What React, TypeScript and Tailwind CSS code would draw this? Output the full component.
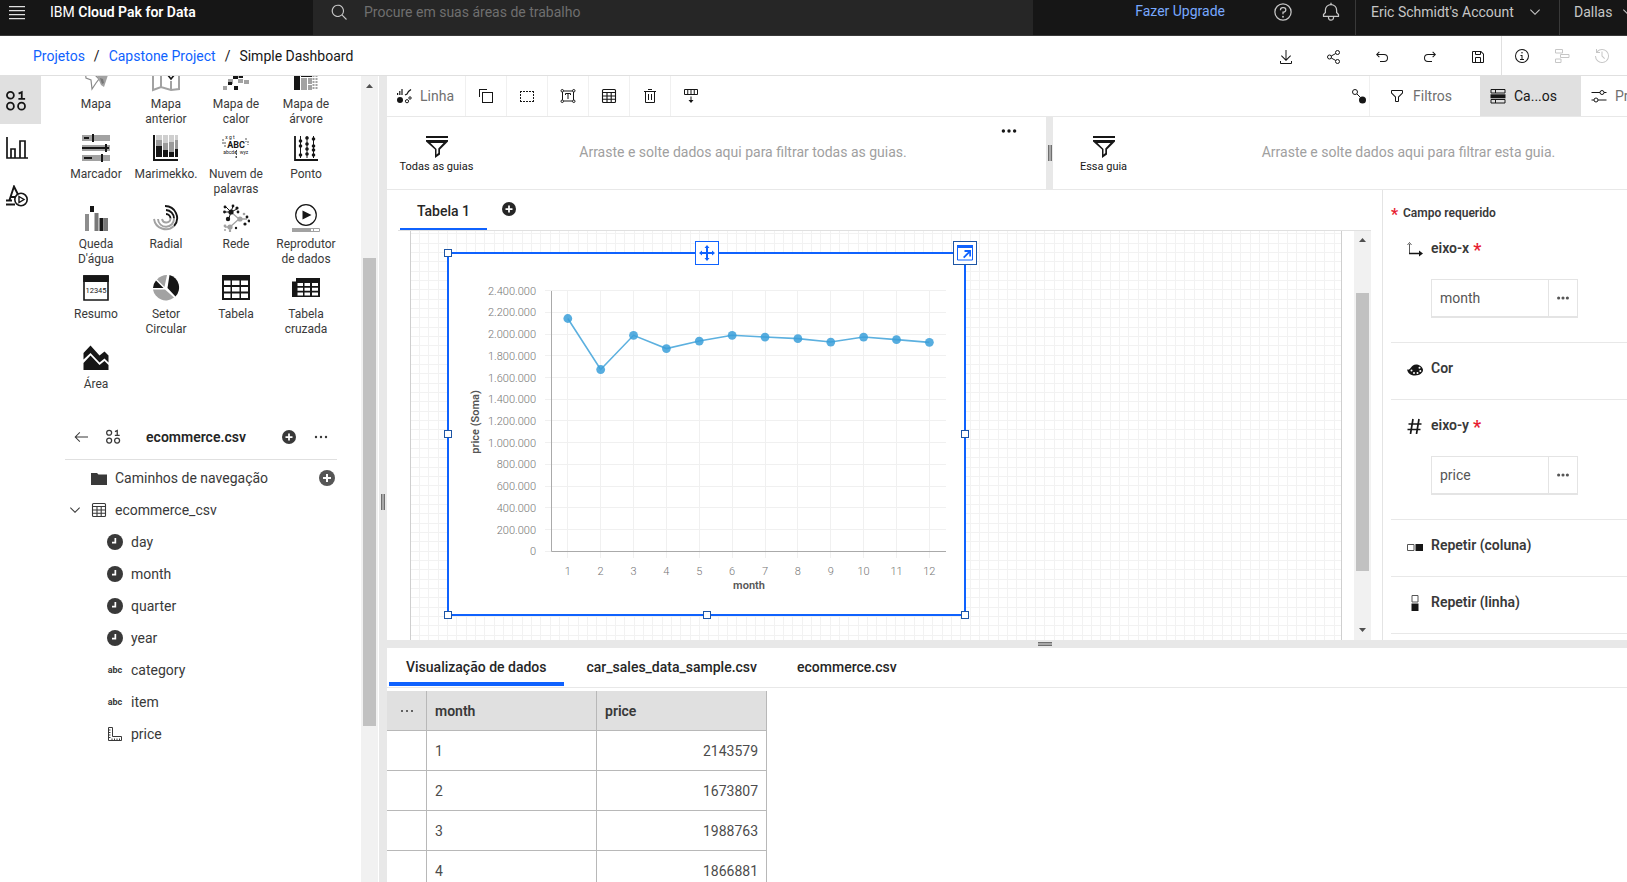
import type { ReactNode } from "react";

type IconProps = { className?: string; children: ReactNode; box?: string };

function Icon({ className = "size-4", children, box = "0 0 32 32" }: IconProps) {
  return (
    <svg aria-hidden="true" viewBox={box} fill="currentColor" className={`shrink-0 ${className}`}>
      {children}
    </svg>
  );
}

const ChevronDown = ({ className }: { className?: string }) => (
  <Icon className={className}>
    <path d="M16 22L6 12 7.4 10.6 16 19.2 24.6 10.6 26 12z" />
  </Icon>
);

const DataSet = ({ className }: { className?: string }) => (
  <Icon className={className} box="0 0 20 20">
    <g fill="none" stroke="currentColor" strokeWidth="1.7">
      <circle cx="4.2" cy="5" r="3.3" />
      <circle cx="4.2" cy="15.4" r="3.3" />
      <circle cx="14.8" cy="15.4" r="3.3" />
      <path d="M12 3.4L15 2v6.5M11.8 8.4h6.4" />
    </g>
  </Icon>
);

const AddFilled = ({ className }: { className?: string }) => (
  <Icon className={className} box="0 0 16 16">
    <circle cx="8" cy="8" r="8" />
    <path d="M7 4h2v3h3v2H9v3H7V9H4V7h3z" fill="#fff" />
  </Icon>
);

const Dots = ({ className = "size-4", r = 1.2 }: { className?: string; r?: number }) => (
  <Icon className={className} box="0 0 16 16">
    <circle cx="3" cy="8" r={r} />
    <circle cx="8" cy="8" r={r} />
    <circle cx="13" cy="8" r={r} />
  </Icon>
);

const TableGrid = ({ className }: { className?: string }) => (
  <Icon className={className} box="0 0 16 16">
    <g fill="none" stroke="currentColor" strokeWidth="1.1">
      <rect x="1.5" y="1.5" width="13" height="13" rx="1" />
      <path d="M1.5 4.5h13M1.5 8h13M1.5 11.3h13M6 4.5v10M10.2 4.5v10" />
    </g>
  </Icon>
);

const Clock = () => (
  <Icon box="0 0 16 16">
    <circle cx="8" cy="8" r="8" />
    <path d="M7.5 4h1.7v5.4H5V7.8h2.5z" fill="#fff" />
  </Icon>
);

const Ruler = () => (
  <Icon box="0 0 16 16">
    <path
      d="M1.5 1.5h4v9h9v4h-13zM1.5 4h2M1.5 6.5h2M1.5 9h2M1.5 11.5h2M5 14.5v-2M7.5 14.5v-2M10 14.5v-2M12.5 14.5v-2"
      fill="none"
      stroke="currentColor"
    />
  </Icon>
);

const FilterAll = () => (
  <Icon className="size-[22px]" box="0 0 22 22">
    <path d="M0 0h22v2H0zM0 4h22v1.5l-8 8v5L9 22v-8.5L0 5.5zM4.5 7l6 6v5.5l1.8-1.4V12.5L17.5 7z" fillRule="evenodd" />
  </Icon>
);

const G = "#a2a2a2";

const chartTypes: { label: string; art: ReactNode }[] = [
  {
    label: "Mapa",
    art: (
      <>
        <path d="M3 6l1 8 5 2 1 9 4-6 3-4-6-6z" fill="none" stroke="#8a8a8a" strokeWidth="1.2" />
        <path d="M15 12l11-1-4 12-3-2z" fill={G} />
        <path d="M18 14l3 1 1 4-2 1z" fill="#777" />
      </>
    ),
  },
  {
    label: "Mapa anterior",
    art: (
      <>
        <path d="M1 4v22l8-3 10 3 8-1V3M9 4v19M19 17v9" fill="none" stroke={G} strokeWidth="2" />
        <path d="M15 10l4 5 4-5" fill="none" stroke="#161616" strokeWidth="1.6" />
      </>
    ),
  },
  {
    label: "Mapa de calor",
    art: (
      <>
        <path d="M6 15h5v5H6zM16 15h5v4h-5zM22 16h5v4h-5zM1 22h4v4H1zM16 10h5v4h-5z" fill={G} />
        <path d="M11 10h5v5h-5zM17 10h4v4h-4zM6 18h4v3H6zM12 22h4v4h-4z" />
      </>
    ),
  },
  {
    label: "Mapa de árvore",
    art: (
      <>
        <path d="M2 8h6v18H2zM9 8h11v5H9z" />
        <path d="M9 14h6v12H9zM16 14h4v6h-4zM16 21h4v5h-4z" fill={G} />
        <path d="M21.5 8v18M24.5 8v18" stroke={G} strokeWidth="2" strokeDasharray="2 1" />
      </>
    ),
  },
  {
    label: "Marcador",
    art: (
      <>
        <path d="M0 1h28v6H0zM0 11h28v6H0zM0 21h28v6H0z" fill={G} />
        <path d="M2 3h5v2H2zM10 0h2v8h-2zM0 13h27v2H0zM23 10h2v8h-2zM2 23h8v2H2zM19 20h2v8h-2z" />
      </>
    ),
  },
  {
    label: "Marimekko.",
    art: (
      <>
        <path d="M4 1h6v8H4zM11 1h5v10h-5zM17 1h5v12h-5zM23 1h3v8h-3z" fill="#cfcfcf" />
        <path d="M4 6h6v6H4zM11 9h5v7h-5zM17 8h5v10h-5zM23 6h3v9h-3z" fill="#9b9b9b" />
        <path d="M1 1h2v24h23v2H1zM4 12h6v11H4zM11 16h5v7h-5zM17 18h5v5h-5zM23 15h3v8h-3z" />
      </>
    ),
  },
  {
    label: "Nuvem de palavras",
    art: (
      <g fontFamily="Roboto, sans-serif" textAnchor="middle">
        <text x="14" y="14" fontSize="9" fontWeight="700">ABC</text>
        <text x="8" y="20" fontSize="5">abcde</text>
        <text x="22" y="20" fontSize="5">wyz</text>
        <text x="8" y="5" fontSize="5">x g t</text>
        <path d="M1 5v5M3 8v5M24 4v4M26 7v4M14.5 16v8M13 17.5h3M13 23h3" stroke="#555" strokeDasharray="2 1" />
      </g>
    ),
  },
  {
    label: "Ponto",
    art: (
      <>
        <path d="M3 2v24h23" fill="none" stroke="#161616" strokeWidth="1.8" />
        <path d="M8.5 2v22M15 2v22M21.5 2v22" stroke="#161616" />
        {[[8.5, 7], [8.5, 12], [8.5, 21], [15, 4], [15, 10], [15, 15], [15, 20], [21.5, 5], [21.5, 12], [21.5, 16], [21.5, 21]].map(([x, y]) => (
          <circle key={`${x}-${y}`} cx={x} cy={y} r="1.8" />
        ))}
      </>
    ),
  },
  {
    label: "Queda D'água",
    art: (
      <>
        <path d="M3 10h4v17H3z" fill="#8d8d8d" />
        <path d="M12.5 9h4v18h-4zM22 14h4v13h-4z" fill="#777" />
        <path d="M8 2h4v6H8zM17.5 14h4v13h-4z" />
      </>
    ),
  },
  {
    label: "Radial",
    art: (
      <g fill="none" strokeWidth="1.9">
        <path d="M13 2a12 12 0 0 1 9 20M14 6a8.5 8.5 0 0 1 8 8.5M14 10a4.5 4.5 0 0 1 4.5 4.5" stroke="#161616" />
        <path d="M22 22A12 12 0 0 1 2 15M22 14.5A8 8 0 0 1 6 15M18.5 14.5a4.3 4.3 0 0 1-8.5.5" stroke={G} />
      </g>
    ),
  },
  {
    label: "Rede",
    art: (
      <>
        <path d="M9 8l8 7M8 23l9-8M17 15h8M8 23v4M8 23H3" fill="none" stroke={G} strokeWidth="1.3" />
        <path d="M9 8L4 3M9 8l2-6M9 8l6-3M9 8H3M9 8l-2 6" stroke="#161616" />
        {[[9, 8, 2.6], [3, 3, 1.4], [11, 2, 1.4], [15, 4, 1.6], [2.5, 8, 1.4], [16, 8, 1.4], [6, 15, 2.2], [25, 13, 1.4], [23, 20, 1.6], [27, 17, 1.4], [14, 24, 1.2]].map(([x, y, r]) => (
          <circle key={`${x}-${y}`} cx={x} cy={y} r={r} />
        ))}
        {[[18, 15, 2.6], [8, 23, 2.6], [3, 22, 1.4], [8, 27, 1.2], [22, 10, 1.3], [3, 26, 1]].map(([x, y, r]) => (
          <circle key={`${x}-${y}`} cx={x} cy={y} r={r} fill={G} />
        ))}
      </>
    ),
  },
  {
    label: "Reprodutor de dados",
    art: (
      <>
        <circle cx="14" cy="11" r="10.3" fill="none" stroke="#161616" strokeWidth="1.2" />
        <path d="M10.5 6.5l9 4.5-9 4.5z" />
        <path d="M0 24h19v4H0z" fill={G} />
        <path d="M19 24.5h8.5v3H19M21.5 24v4" fill="none" stroke={G} />
      </>
    ),
  },
  {
    label: "Resumo",
    art: (
      <>
        <path d="M2 2h24v24H2z" fill="#fff" stroke="#161616" strokeWidth="1.6" />
        <path d="M1.2 1.2h25.6V8H1.2z" />
        <text x="14" y="19" fontSize="7.5" textAnchor="middle" fontFamily="Roboto, sans-serif">12345</text>
      </>
    ),
  },
  {
    label: "Setor Circular",
    art: (
      <>
        <path d="M17.5 1A13 13 0 0 1 23.5 22.5L15.5 14z" />
        <path d="M12.5 13L5 5.5A13 13 0 0 1 15 1z" fill={G} />
        <path d="M11.5 14H1a12.5 12.5 0 0 1 3-7.5z" />
        <path d="M1 15.5h12l9 8A13 13 0 0 1 1 15.5z" fill={G} />
      </>
    ),
  },
  {
    label: "Tabela",
    art: (
      <path d="M0 1h28v25H0zM2 6.5v4.5h6.5V6.5zM10 6.5v4.5h7.5V6.5zM19 6.5v4.5h7V6.5zM2 13v4.5h6.5V13zM10 13v4.5h7.5V13zM19 13v4.5h7V13zM2 19.5V24h6.5v-4.5zM10 19.5V24h7.5v-4.5zM19 19.5V24h7v-4.5z" fillRule="evenodd" />
    ),
  },
  {
    label: "Tabela cruzada",
    art: (
      <path d="M4 4h24v19H0V7.5h4zM5.5 9v3H11V9zM12.5 9v3H18V9zM20 9v3h6V9zM5.5 13.7v3H11v-3zM12.5 13.7v3H18v-3zM20 13.7v3h6v-3zM5.5 18.4v3H11v-3zM12.5 18.4v3H18v-3zM20 18.4v3h6v-3z" fillRule="evenodd" />
    ),
  },
  {
    label: "Área",
    art: (
      <path d="M1.5 9l7-7.5 9 10 5-4 4 4v7l-4-4-5 4-9-9.5-7 6.5zM1.5 19l7-7.5 9 9.5 5-4 4 4v5h-25z" />
    ),
  },
];

const fields: { name: string; icon: "time" | "text" | "measure" }[] = [
  { name: "day", icon: "time" },
  { name: "month", icon: "time" },
  { name: "quarter", icon: "time" },
  { name: "year", icon: "time" },
  { name: "category", icon: "text" },
  { name: "item", icon: "text" },
  { name: "price", icon: "measure" },
];

const series = [2143579, 1673807, 1988763, 1866881, 1936000, 1989000, 1973000, 1958000, 1927000, 1973000, 1949000, 1924000];

const yLabels = ["0", "200.000", "400.000", "600.000", "800.000", "1.000.000", "1.200.000", "1.400.000", "1.600.000", "1.800.000", "2.000.000", "2.200.000", "2.400.000"];

function Header() {
  return (
    <header className="flex h-9 shrink-0 overflow-hidden border-b border-[#393939] bg-[#161616] text-[#c6c6c6]">
      <div className="flex w-[313px] shrink-0 items-center pb-3">
        <button aria-label="Menu" className="mr-6 ml-2 flex">
          <Icon className="size-[18px] text-[#e0e0e0]" box="0 0 18 18">
            <path d="M1 3h16v1.3H1zM1 7h16v1.3H1zM1 11h16v1.3H1zM1 15h16v1.3H1z" />
          </Icon>
        </button>
        <span className="text-sm text-white">
          IBM <b className="font-semibold">Cloud Pak for Data</b>
        </span>
      </div>
      <label className="flex max-w-[720px] flex-1 items-center gap-4 bg-[#262626] pb-3 pl-[17px]">
        <Icon className="size-[18px]">
          <path d="M30 28.6L22.4 21a11 11 0 1 0-1.4 1.4l7.6 7.6zM5 14a9 9 0 1 1 9 9 9 9 0 0 1-9-9z" />
        </Icon>
        <input
          aria-label="Procurar"
          placeholder="Procure em suas áreas de trabalho"
          className="w-full bg-transparent text-sm outline-none placeholder:text-[#6f6f6f]"
        />
      </label>
      <div className="ml-auto flex shrink-0">
        <a href="#upgrade" className="mr-12 pt-px text-sm text-[#78a9ff]">Fazer Upgrade</a>
        <button aria-label="Ajuda" className="mr-7 flex items-center pb-3">
          <Icon className="size-5">
            <path d="M16,2A14,14,0,1,0,30,16,14,14,0,0,0,16,2Zm0,26A12,12,0,1,1,28,16,12,12,0,0,1,16,28Z" />
            <circle cx="16" cy="23.5" r="1.5" />
            <path d="M17,8H15.5A4.49,4.49,0,0,0,11,12.5V13h2v-.5A2.5,2.5,0,0,1,15.5,10H17a2.5,2.5,0,0,1,0,5H15v4.5h2V17a4.5,4.5,0,0,0,0-9Z" />
          </Icon>
        </button>
        <button aria-label="Notificações" className="mr-3.5 flex items-center pb-3">
          <Icon className="size-5">
            <path d="M28.707,19.293,26,16.586V13a10.014,10.014,0,0,0-9-9.949V1H15V3.051A10.014,10.014,0,0,0,6,13v3.586L3.293,19.293A1,1,0,0,0,3,20v3a1,1,0,0,0,1,1h7v.777a5.152,5.152,0,0,0,4.5,5.199A5.006,5.006,0,0,0,21,25V24h7a1,1,0,0,0,1-1V20A1,1,0,0,0,28.707,19.293ZM19,25a3,3,0,0,1-6,0V24h6Zm8-3H5V20.414L7.707,17.707A1,1,0,0,0,8,17V13a8,8,0,0,1,16,0v4a1,1,0,0,0,.293.707L27,20.414Z" />
          </Icon>
        </button>
        <button className="flex w-[204px] items-center justify-between border-l border-[#393939] pr-4 pb-3 pl-[15px] text-sm">
          Eric Schmidt's Account <ChevronDown />
        </button>
        <button className="flex w-[68px] items-center gap-2 overflow-hidden border-l border-[#393939] pb-3 pl-3.5 text-sm">
          Dallas <ChevronDown />
        </button>
      </div>
    </header>
  );
}

function TitleBar() {
  return (
    <div className="flex h-10 shrink-0 items-center border-b border-[#e0e0e0]">
      <nav aria-label="Trilha" className="flex flex-1 gap-[9px] pl-[33px] text-sm text-[#161616]">
        <a href="#projetos" className="text-[#0f62fe]">Projetos</a>
        <span>/</span>
        <a href="#capstone" className="text-[#0f62fe]">Capstone Project</a>
        <span>/</span>
        <span>Simple Dashboard</span>
      </nav>
      <div className="flex items-center gap-8 pt-0.5 pr-[15px] text-[#161616]">
        <button aria-label="Baixar">
          <Icon><path d="M26 24v4H6V24H4v4a2 2 0 002 2H26a2 2 0 002-2V24zM26 14l-1.41-1.41L17 20.17V2H15V20.17L7.41 12.59 6 14 16 24 26 14z" /></Icon>
        </button>
        <button aria-label="Compartilhar">
          <Icon>
            <g fill="none" stroke="currentColor" strokeWidth="2">
              <circle cx="23" cy="7" r="4" />
              <circle cx="23" cy="25" r="4" />
              <circle cx="7" cy="16" r="4" />
              <path d="M10.5 14l9-5M10.5 18l9 5" />
            </g>
          </Icon>
        </button>
        <button aria-label="Desfazer">
          <Icon><path d="M20,10H7.815l3.587-3.586L10,5,4,11,10,17l1.402-1.415L7.818,12H20a6,6,0,0,1,0,12H12v2h8a8,8,0,0,0,0-16Z" /></Icon>
        </button>
        <button aria-label="Refazer">
          <Icon><path d="M12,10H24.185L20.598,6.414,22,5,28,11,22,17l-1.402-1.415L24.182,12H12a6,6,0,0,0,0,12h8v2H12a8,8,0,0,1,0-16Z" /></Icon>
        </button>
        <button aria-label="Salvar">
          <Icon><path d="M27.71,9.29l-5-5A1,1,0,0,0,22,4H6A2,2,0,0,0,4,6V26a2,2,0,0,0,2,2H26a2,2,0,0,0,2-2V10A1,1,0,0,0,27.71,9.29ZM12,6h8v4H12Zm8,20H12V18h8Zm2,0V18a2,2,0,0,0-2-2H12a2,2,0,0,0-2,2v8H6V6h4v4a2,2,0,0,0,2,2h8a2,2,0,0,0,2-2V6.41l4,4V26Z" /></Icon>
        </button>
      </div>
      <div className="flex h-full items-center gap-6 border-l border-[#e0e0e0] pr-[17px] pl-3 text-[#161616]">
        <button aria-label="Informações">
          <Icon>
            <path d="M17 22V14H13v2h2v6H12v2h8V22zM16 8a1.5 1.5 0 1 0 1.5 1.5A1.5 1.5 0 0 0 16 8z" />
            <path d="M16 30A14 14 0 1 1 30 16 14 14 0 0 1 16 30zM16 4A12 12 0 1 0 28 16 12 12 0 0 0 16 4z" />
          </Icon>
        </button>
        <button aria-label="Linha do tempo" disabled className="text-[#c6c6c6]">
          <Icon>
            <path d="M3 3h14v7H3zM13 13h17v6H13zM3 22h11v7H3z" fill="none" stroke="currentColor" strokeWidth="2" />
          </Icon>
        </button>
        <button aria-label="Histórico" disabled className="text-[#c6c6c6]">
          <Icon>
            <path d="M20.59 22L15 16.41V7h2v8.58l5 5.01z" />
            <path d="M16 2A13.94 13.94 0 0 0 6 6.23V2H4v8h8V8H7.08A12 12 0 1 1 4 16H2A14 14 0 1 0 16 2z" />
          </Icon>
        </button>
      </div>
    </div>
  );
}

function Rail() {
  return (
    <nav aria-label="Painéis" className="flex w-[41px] shrink-0 flex-col text-[#161616]">
      <button aria-label="Origens" className="flex h-12 items-center bg-[#e0e0e0] pl-1.5">
        <DataSet className="size-[21px]" />
      </button>
      <button aria-label="Visualizações" className="flex h-12 items-center pl-1.5">
        <Icon className="size-[22px]" box="0 0 22 22">
          <path d="M1 0v21h21M5 21V12h4v9M14 21V4h5v17" fill="none" stroke="currentColor" strokeWidth="1.7" />
        </Icon>
      </button>
      <button aria-label="Widgets" className="flex h-12 items-center pl-1.5">
        <Icon className="size-[22px]" box="0 0 22 22">
          <path d="M3.5 15L8 1.5l4 8M4.5 12h5M0 15.5h6M0 19.5h9" fill="none" stroke="currentColor" strokeWidth="1.9" />
          <circle cx="15" cy="14.5" r="6.2" fill="#fff" stroke="currentColor" strokeWidth="1.6" />
          <path d="M13 11.5l5 3-5 3z" fill="none" stroke="currentColor" strokeWidth="1.4" />
        </Icon>
      </button>
    </nav>
  );
}

function ScrollArrow({ down = false }: { down?: boolean }) {
  return (
    <svg aria-hidden="true" viewBox="0 0 7 4" className="h-1 w-[7px] shrink-0" fill="#505050">
      <path d={down ? "M0 0h7L3.5 4z" : "M0 4h7L3.5 0z"} />
    </svg>
  );
}

function FieldIcon({ kind }: { kind: "time" | "text" | "measure" }) {
  if (kind === "time") return <Clock />;
  if (kind === "measure") return <Ruler />;
  return <span className="w-4 text-center text-[9px] font-bold">abc</span>;
}

function SourcePanel() {
  return (
    <aside className="flex w-[338px] shrink-0 overflow-hidden">
      <div className="w-80 shrink-0 px-5">
        <div className="-mt-3 grid grid-cols-4">
          {chartTypes.map((t) => (
            <button key={t.label} className="flex h-[70px] w-[70px] flex-col items-center gap-[5px] text-xs leading-[15px] text-[#393939]">
              <Icon className="size-7 text-[#161616]" box="0 0 28 28">{t.art}</Icon>
              <span className={t.label === "Reprodutor de dados" ? "w-[70px]" : "w-16"}>{t.label}</span>
            </button>
          ))}
        </div>
        <div className="mx-1 flex h-[46px] items-center border-b border-[#e0e0e0] pr-2 pl-2 text-[#393939]">
          <button aria-label="Voltar">
            <Icon><path d="M13 26l1.41-1.41L6.83 17H30V15H6.83l7.58-7.59L13 6 3 16z" /></Icon>
          </button>
          <span className="ml-[17px] flex"><DataSet className="size-[15px]" /></span>
          <h2 className="flex-1 pr-[11px] text-center text-sm font-semibold text-[#262626]">ecommerce.csv</h2>
          <button aria-label="Adicionar origem" className="mr-[17px]"><AddFilled className="size-3.5" /></button>
          <button aria-label="Mais opções"><Dots /></button>
        </div>
        <ul className="mx-1 pt-0.5 text-sm text-[#393939]">
          <li className="flex h-8 items-center pr-0.5 pl-[26px]">
            <Icon box="0 0 16 16"><path d="M0 3h6l1.5 1.5H16V15H0z" /></Icon>
            <span className="ml-2 flex-1">Caminhos de navegação</span>
            <button aria-label="Adicionar caminho" className="text-[#565656]"><AddFilled className="size-4" /></button>
          </li>
          <li>
            <button className="flex h-8 items-center pl-0.5">
              <ChevronDown className="size-4" />
              <span className="ml-2 flex"><TableGrid className="size-4" /></span>
              <span className="ml-2">ecommerce_csv</span>
            </button>
            <ul>
              {fields.map((f) => (
                <li key={f.name}>
                  <button className="flex h-8 items-center gap-2 pl-[42px]">
                    <FieldIcon kind={f.icon} />
                    {f.name}
                  </button>
                </li>
              ))}
            </ul>
          </li>
        </ul>
      </div>
      <div className="flex w-[17px] shrink-0 flex-col items-center bg-[#f1f1f1] pt-2">
        <ScrollArrow />
        <div className="mt-[170px] h-[468px] w-[13px] bg-[#c1c1c1]" />
      </div>
    </aside>
  );
}

function VerticalGrip() {
  return <div className="h-4 w-1 border-x border-[#6f6f6f] bg-[#a8a8a8]" />;
}

function Toolbar() {
  const cell = "flex w-[41px] items-center justify-center border-r border-[#f0f0f0]";
  return (
    <div className="flex h-[41px] shrink-0 overflow-hidden border-b border-[#e8e8e8] text-sm text-[#161616]">
      <button className="flex w-[79px] shrink-0 items-center gap-2 border-r border-[#f0f0f0] pl-[9px] text-[#6f6f6f]">
        <Icon className="size-4 text-[#161616]" box="0 0 16 16">
          <path d="M1 5h1.2v2H1zM3.2 3h1.2v4H3.2zM5.4 1h1.2v6H5.4z" />
          <path d="M9 7l2-1 1.5-2.5L15 1.5" fill="none" stroke="currentColor" strokeWidth="1.2" />
          <circle cx="4" cy="12" r="3" />
          <g fill="none" stroke="currentColor">
            <circle cx="11" cy="13.2" r="1.6" />
            <circle cx="14" cy="10" r="1.2" />
          </g>
        </Icon>
        <span>Linha</span>
      </button>
      <button aria-label="Copiar" className={cell}>
        <Icon><path d="M28,10V28H10V10H28m2-2H8V30H30V8ZM4,18H2V2H18V4H4Z" /></Icon>
      </button>
      <button aria-label="Selecionar" className={cell}>
        <Icon box="0 0 16 16">
          <path d="M1 3.5h14M1 13.5h14M1.5 3v11M14.5 3v11" fill="none" stroke="currentColor" strokeDasharray="2 1" />
        </Icon>
      </button>
      <button aria-label="Texto" className={cell}>
        <Icon>
          <g fill="none" stroke="currentColor" strokeWidth="2">
            <path d="M7 6h18M7 26h18M5 8v16M27 8v16M11 14v-3h10v3M16 11v11" />
            <circle cx="4.5" cy="5.5" r="2.5" />
            <circle cx="27.5" cy="5.5" r="2.5" />
            <circle cx="4.5" cy="26.5" r="2.5" />
            <circle cx="27.5" cy="26.5" r="2.5" />
          </g>
        </Icon>
      </button>
      <button aria-label="Tabela" className={cell}><TableGrid className="size-4" /></button>
      <button aria-label="Excluir" className={cell}>
        <Icon><path d="M12 12H14V24H12zM18 12H20V24H18zM4 6V8H6V28a2 2 0 002 2H24a2 2 0 002-2V8h2V6zM8 28V8H24V28zM12 2H20V4H12z" /></Icon>
      </button>
      <button aria-label="Expandir" className="flex w-10 items-center justify-center">
        <Icon>
          <path d="M3 3h26v10H3zM9.5 3v10M16 3v10M22.5 3v10" fill="none" stroke="currentColor" strokeWidth="2" />
          <path d="M15 17h2v7h4l-5 6-5-6h4z" />
        </Icon>
      </button>
      <button aria-label="Conexões" className="ml-auto flex w-8 shrink-0 items-center border-r border-[#f0f0f0] pl-[13px]">
        <Icon>
          <circle cx="8" cy="8" r="5" fill="none" stroke="currentColor" strokeWidth="2" />
          <path d="M12 12l7 7" stroke="currentColor" strokeWidth="2" />
          <circle cx="23" cy="24" r="7" />
        </Icon>
      </button>
      <button className="flex w-[110px] shrink-0 items-center gap-2 pl-[19px] text-[#6f6f6f]">
        <Icon className="size-4 text-[#161616]">
          <path d="M18,28H14a2,2,0,0,1-2-2V18.41L4.59,11A2,2,0,0,1,4,9.59V6A2,2,0,0,1,6,4H26a2,2,0,0,1,2,2V9.59A2,2,0,0,1,27.41,11L20,18.41V26A2,2,0,0,1,18,28ZM6,6V9.59l8,8V26h4V17.59l8-8V6Z" />
        </Icon>
        Filtros
      </button>
      <button className="flex w-[101px] shrink-0 items-center gap-2 bg-[#e0e0e0] pl-2.5">
        <Icon box="0 0 16 16">
          <path d="M1 1.5h14v3.5H1zM1 11.5h14V15H1zM5.5 1.5V5M5.5 11.5V15" fill="none" stroke="currentColor" />
          <path d="M.5 6.3h15v4H.5z" />
        </Icon>
        Ca...os
      </button>
      <button className="flex w-[46px] shrink-0 items-center gap-2 overflow-hidden pl-2.5 text-[#6f6f6f]">
        <Icon className="size-4 text-[#161616]">
          <g fill="none" stroke="currentColor" strokeWidth="2">
            <path d="M1 9h17M26 9h5M1 24h5M14 24h17" />
            <circle cx="22" cy="9" r="4" />
            <circle cx="10" cy="24" r="4" />
          </g>
        </Icon>
        Propriedades
      </button>
    </div>
  );
}

function FilterBar() {
  return (
    <div className="flex h-[73px] shrink-0 border-b border-[#e8e8e8]">
      <section className="flex min-w-0 flex-1 pr-7">
        <div className="flex w-[99px] shrink-0 flex-col items-center pt-[19px] text-[11px] leading-[18px] text-[#161616]">
          <FilterAll />
          <span>Todas as guias</span>
        </div>
        <p className="flex-1 pt-[25px] text-center text-sm text-[#a0a0a0]">Arraste e solte dados aqui para filtrar todas as guias.</p>
        <button aria-label="Opções de filtro" className="self-start pt-[5px] text-[#161616]"><Dots className="size-[18px]" r={1.5} /></button>
      </section>
      <div className="flex w-[7px] shrink-0 items-center justify-center bg-[#e8e8e8]"><VerticalGrip /></div>
      <section className="flex w-[574px] shrink-0">
        <div className="flex w-[101px] shrink-0 flex-col items-center pt-[19px] text-[11px] leading-[18px] text-[#161616]">
          <FilterAll />
          <span>Essa guia</span>
        </div>
        <p className="flex-1 pt-[25px] pl-9 text-center text-sm text-[#a0a0a0]">Arraste e solte dados aqui para filtrar esta guia.</p>
      </section>
    </div>
  );
}

const xAt = (i: number) => 118.8 + i * 32.87;
const yAt = (v: number) => 297.3 - (v / 200000) * 21.72;

function LineChart() {
  return (
    <svg role="img" aria-label="price (Soma) por month" viewBox="0 0 515 360" className="h-[360px] w-[515px]" fontFamily="Roboto, sans-serif" fontSize="11">
      <g stroke="#f0f0f0">
        {yLabels.map((_, i) => (
          <path key={i} d={`M96 ${Math.floor(yAt(i * 200000)) + 0.5}H497`} />
        ))}
        {series.map((_, i) => (
          <path key={i} d={`M${Math.floor(xAt(i)) + 0.5} 37V304`} />
        ))}
      </g>
      <path d="M102.5 37V297.5H497" fill="none" stroke="#aaa" />
      <g fill="#757575" textAnchor="end" fontWeight="300">
        {yLabels.map((l, i) => (
          <text key={l} x="87" y={Math.round(yAt(i * 200000)) + 4}>{l}</text>
        ))}
      </g>
      <g fill="#757575" textAnchor="middle" fontWeight="300">
        {series.map((_, i) => (
          <text key={i} x={xAt(i)} y="321">{i + 1}</text>
        ))}
      </g>
      <text x="300" y="335" textAnchor="middle" fill="#565656" fontWeight="600">month</text>
      <text transform="translate(30 168) rotate(-90)" textAnchor="middle" fill="#565656" fontWeight="600">price (Soma)</text>
      <polyline points={series.map((v, i) => `${xAt(i)},${yAt(v)}`).join(" ")} fill="none" stroke="#5cb0df" strokeWidth="1.6" />
      <g fill="#3a9fd9" fillOpacity=".85">
        {series.map((v, i) => (
          <circle key={i} cx={xAt(i)} cy={yAt(v)} r="4.4" />
        ))}
      </g>
    </svg>
  );
}

function Widget() {
  const handle = "absolute size-2 border border-[#1d55a5] bg-white";
  return (
    <div className="absolute top-[21px] left-9 border-2 border-[#0f62fe] bg-white">
      <LineChart />
      <span className={`${handle} -top-[5px] -left-[5px]`} />
      <span className={`${handle} top-1/2 -left-[5px] -mt-1`} />
      <span className={`${handle} top-1/2 -right-[5px] -mt-1`} />
      <span className={`${handle} -bottom-[5px] -left-[5px]`} />
      <span className={`${handle} -bottom-[5px] left-1/2 -ml-1`} />
      <span className={`${handle} -right-[5px] -bottom-[5px]`} />
      <button aria-label="Mover" className="absolute -top-[13px] left-1/2 -ml-3 flex size-6 items-center justify-center border border-[#0f62fe] bg-white text-[#0f62fe]">
        <Icon box="0 0 16 16">
          <path d="M8 0l2.5 3H9v4h4V5.5L16 8l-3 2.5V9H9v4h1.5L8 16l-2.5-3H7V9H3v1.5L0 8l3-2.5V7h4V3H5.5z" />
        </Icon>
      </button>
      <button aria-label="Expandir" className="absolute -top-[13px] -right-[13px] flex size-6 items-center justify-center border border-[#1d55a5] bg-white text-[#0f62fe]">
        <Icon box="0 0 16 16">
          <path d="M.5 1h15v14H.5z" fill="none" stroke="currentColor" />
          <path d="M0 0h16v3H0zM7.5 5H14v6.5h-1.7V8.2l-5 5L6 12l5-5H7.5z" />
        </Icon>
      </button>
    </div>
  );
}

function CanvasArea() {
  return (
    <section className="flex min-w-0 flex-1 flex-col pr-[11px] pl-[11px]">
      <div className="flex h-[41px] shrink-0 items-end border-b border-[#e0e0e0] pl-0.5" role="tablist">
        <button role="tab" aria-selected="true" className="h-10 w-[87px] border-b-2 border-[#0f62fe] pt-[3px] text-sm font-medium text-[#262626]">
          Tabela 1
        </button>
        <button aria-label="Adicionar guia" className="mb-3.5 ml-[15px] text-[#262626]"><AddFilled className="size-3.5" /></button>
      </div>
      <div className="flex min-h-0 flex-1">
        <div className="relative ml-3 min-w-0 flex-1 overflow-hidden border-x border-[#cfcfcf] bg-[repeating-linear-gradient(90deg,transparent_0_8px,#f2f2f2_8px_9px,transparent_9px_17px,#f2f2f2_17px_18px,transparent_18px_27px,#f2f2f2_27px_28px),repeating-linear-gradient(180deg,transparent_0_2px,#f2f2f2_2px_3px,transparent_3px_12px,#f2f2f2_12px_13px,transparent_13px_21px,#f2f2f2_21px_22px,transparent_22px_28px)]">
          <Widget />
        </div>
        <div className="ml-3 flex w-[17px] shrink-0 flex-col items-center bg-[#f1f1f1] pt-[7px] pb-2">
          <ScrollArrow />
          <div className="mt-[51px] mb-auto h-[278px] w-[13px] bg-[#c1c1c1]" />
          <ScrollArrow down />
        </div>
      </div>
    </section>
  );
}

function Slot({ label, icon, value, required = false }: { label: string; icon: ReactNode; value?: string; required?: boolean }) {
  return (
    <section className={`border-b border-[#e8e8e8] pt-[15px] pl-4 ${value ? "h-[120px]" : "h-[57px]"}`}>
      <div className="flex h-5 items-start gap-2">
        <span className="flex h-[22px] w-4 shrink-0 items-center text-[#161616]">{icon}</span>
        <h3 className="text-sm font-semibold text-[#393939]">{label}</h3>
        {required && <span className="-ml-1 text-lg leading-6 font-semibold text-[#e71d32]">*</span>}
      </div>
      {value && (
        <div className="mt-[21px] ml-6 flex h-[39px] w-[147px] border border-b-2 border-[#e4e4e4] text-sm text-[#565656]">
          <button className="flex-1 pl-2 text-left">{value}</button>
          <button aria-label={`Opções de ${value}`} className="flex w-[29px] items-center justify-center border-l border-[#e4e4e4]">
            <Dots className="size-3.5" r={1.8} />
          </button>
        </div>
      )}
    </section>
  );
}

function FieldsPanel() {
  return (
    <aside className="w-[245px] shrink-0 overflow-hidden border-l border-[#e4e4e4] pl-2">
      <p className="flex h-[33px] gap-[5px] pt-[15px] text-xs font-semibold text-[#393939]">
        <span className="w-[7px] text-base leading-5 text-[#e71d32]">*</span> Campo requerido
      </p>
      <Slot label="eixo-x" required value="month" icon={
        <Icon box="0 0 16 16">
          <path d="M2.5 3v9.5" stroke="currentColor" fill="none" strokeWidth=".7" />
          <path d="M.5 4l2-2.5 2 2.5" fill="none" stroke="currentColor" strokeWidth=".7" />
          <path d="M2 11.8h10V9.5l4 3-4 3v-2.2H2z" />
        </Icon>
      } />
      <Slot label="Cor" icon={
        <Icon box="0 0 16 16">
          <path d="M0 8.5c2 .5 3-.5 4-2S7 3 10 3.5s6 3 6 5.5-3 5.5-8 5.5-7-2.5-8-6z" />
          <g fill="#fff">
            <circle cx="4.5" cy="9.5" r="1" /><circle cx="7" cy="12" r="1" /><circle cx="10.5" cy="12" r="1" /><circle cx="13.3" cy="10" r="1" /><circle cx="12.5" cy="6.8" r="1" />
          </g>
        </Icon>
      } />
      <Slot label="eixo-y" required value="price" icon={
        <Icon box="0 0 16 16"><path d="M1.5 6h13M.5 11.5h13M6 1L3.5 16M12 1L9.5 16" fill="none" stroke="currentColor" strokeWidth="1.7" /></Icon>
      } />
      <Slot label="Repetir (coluna)" icon={
        <Icon box="0 0 16 16"><path d="M.5 6.5H7v6H.5z" fill="none" stroke="#555" /><path d="M8.5 6H16v7H8.5z" /></Icon>
      } />
      <Slot label="Repetir (linha)" icon={
        <Icon box="0 0 16 16"><path d="M5 .5h6V7H5z" fill="none" stroke="#555" /><path d="M4.5 8.5h7V16h-7z" /></Icon>
      } />
    </aside>
  );
}

function DataPreview() {
  const tab = "h-[38px] border-b-4 px-[17px] pt-1 text-sm font-medium text-[#262626]";
  return (
    <section className="h-[234px] shrink-0 overflow-hidden">
      <div role="tablist" className="flex h-10 gap-1.5 border-b border-[#e8e8e8] pl-0.5">
        <button role="tab" aria-selected="true" className={`${tab} border-[#0f62fe]`}>Visualização de dados</button>
        <button role="tab" aria-selected="false" className={`${tab} border-transparent`}>car_sales_data_sample.csv</button>
        <button role="tab" aria-selected="false" className={`${tab} border-transparent`}>ecommerce.csv</button>
      </div>
      <table className="mt-[3px] table-fixed border-separate border-spacing-0 text-sm text-[#4c4c4c]">
        <thead>
          <tr className="bg-[#e0e0e0] text-left text-[#393939]">
            <th className="h-10 w-10 border-r border-b border-[#b8b8b8]">
              <button aria-label="Opções da tabela" className="flex w-full justify-center"><Dots r={1} /></button>
            </th>
            <th className="w-[170px] border-r border-b border-[#b8b8b8] px-2 font-semibold">month</th>
            <th className="w-[170px] border-r border-b border-[#b8b8b8] px-2 font-semibold">price</th>
          </tr>
        </thead>
        <tbody>
          {series.slice(0, 4).map((v, i) => (
            <tr key={i}>
              <td className="h-10 border-r border-b border-[#b8b8b8]" />
              <td className="border-r border-b border-[#b8b8b8] px-2">{i + 1}</td>
              <td className="border-r border-b border-[#b8b8b8] px-2 text-right">{v}</td>
            </tr>
          ))}
        </tbody>
      </table>
    </section>
  );
}

export default function App() {
  return (
    <div className="flex h-screen flex-col overflow-hidden bg-white font-['Roboto',sans-serif]">
      <Header />
      <TitleBar />
      <div className="flex min-h-0 flex-1">
        <Rail />
        <SourcePanel />
        <div className="flex w-2 shrink-0 items-center justify-center bg-[#e8e8e8] pt-[46px]"><VerticalGrip /></div>
        <main className="flex min-w-0 flex-1 flex-col">
          <Toolbar />
          <FilterBar />
          <div className="flex min-h-0 flex-1">
            <CanvasArea />
            <FieldsPanel />
          </div>
          <div className="flex h-2 shrink-0 items-center justify-center bg-[#e8e8e8] pl-[76px]">
            <div className="h-1 w-3.5 border-y border-[#6f6f6f] bg-[#a8a8a8]" />
          </div>
          <DataPreview />
        </main>
      </div>
    </div>
  );
}
